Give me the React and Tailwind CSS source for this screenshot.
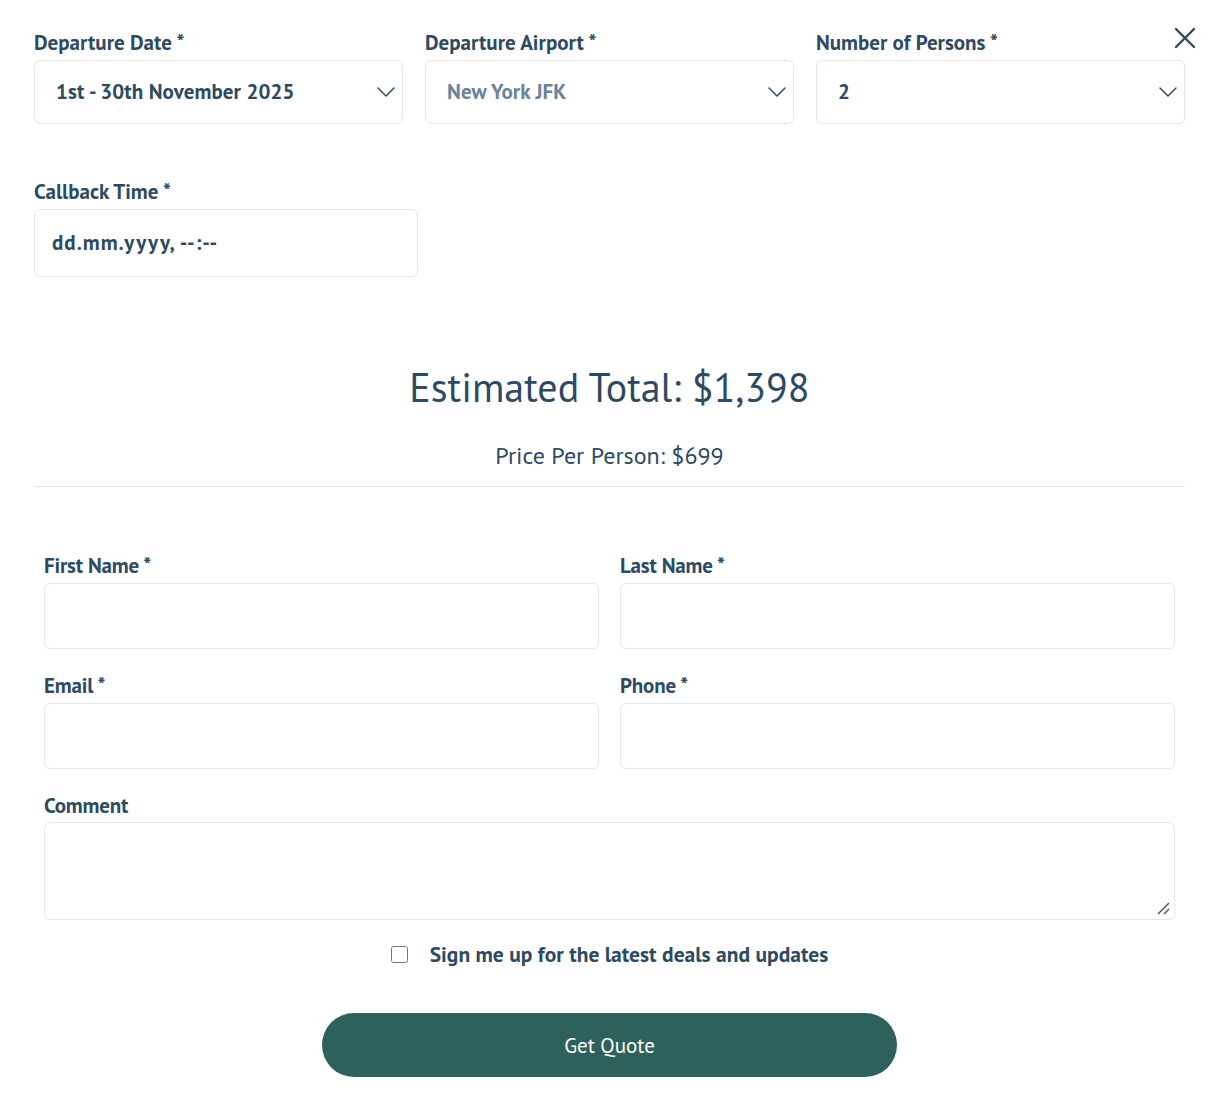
import React from 'react';

const font = { fontFamily: '"PT Sans", Lato, "Noto Sans", sans-serif' };

function Chevron() {
  return (
    <svg width="18" height="10" viewBox="0 0 18 10" fill="none" className="shrink-0">
      <path d="M1 1l8 8 8-8" stroke="#2e4a62" strokeWidth="1.5" strokeLinecap="round" strokeLinejoin="round" />
    </svg>
  );
}

function SelectBox({ label, value, muted }) {
  return (
    <div className="flex flex-col">
      <label className="text-[21px] leading-[24px] font-bold text-[#2e4a62] mb-[5px]">{label} *</label>
      <div className="h-[64px] border border-[#e3e6ea] rounded-[6px] flex items-center justify-between pl-[21px] pr-[7px] bg-white">
        <span className={'text-[21px] font-bold tracking-[0.1px] ' + (muted ? 'text-[#6c8398]' : 'text-[#2e4a62]')}>{value}</span>
        <Chevron />
      </div>
    </div>
  );
}

function Field({ label, required, tall }) {
  return (
    <div className="flex flex-col">
      <label className={'text-[21px] leading-[24px] font-bold text-[#2e4a62] tracking-[-0.2px] ' + (tall ? 'mb-[4px]' : 'mb-[5px]')}>
        {label}{required ? ' *' : ''}
      </label>
      <div className={'relative border border-[#e3e6ea] rounded-[6px] bg-white ' + (tall ? 'h-[98px]' : 'h-[66px]')}>
        {tall && (
          <svg className="absolute right-[4px] bottom-[4px]" width="14" height="14" viewBox="0 0 14 14">
            <path d="M13 2L2 13M13 8L8 13" stroke="#555" strokeWidth="1.5" />
          </svg>
        )}
      </div>
    </div>
  );
}

export default function App() {
  return (
    <div className="w-[1226px] h-[1108px] bg-white relative" style={font}>
      <button className="absolute left-[1174px] top-[27px] w-[22px] h-[22px]">
        <svg width="22" height="22" viewBox="0 0 22 22">
          <path d="M2 2l18 18M20 2L2 20" stroke="#2e4a62" strokeWidth="2.4" strokeLinecap="round" />
        </svg>
      </button>

      <div className="px-[34px] pt-[31px] pr-[41px]">
        <div className="grid grid-cols-3 gap-[22px]">
          <SelectBox label="Departure Date" value="1st - 30th November 2025" />
          <SelectBox label="Departure Airport" value="New York JFK" muted />
          <SelectBox label="Number of Persons" value="2" />
        </div>

        <div className="mt-[56px] w-[384px] flex flex-col">
          <label className="text-[21px] leading-[24px] font-bold text-[#2e4a62] mb-[5px]">Callback Time *</label>
          <div className="h-[68px] border border-[#e3e6ea] rounded-[6px] flex items-center pl-[17px]">
            <span className="text-[21px] font-bold text-[#2e4a62] tracking-[1px]">dd.mm.yyyy, --:--</span>
          </div>
        </div>

        <div className="mt-[86px] text-center text-[40px] leading-[48px] text-[#2e4a62]">Estimated Total: $1,398</div>
        <div className="mt-[30px] text-center text-[24px] leading-[30px] text-[#2e4a62]">Price Per Person: $699</div>
        <div className="mt-[15px] border-t border-[#e3e6ea]" />

        <div className="px-[10px] pt-[67px]">
          <div className="grid grid-cols-2 gap-x-[21px] gap-y-[25px]">
            <Field label="First Name" required />
            <Field label="Last Name" required />
            <Field label="Email" required />
            <Field label="Phone" required />
            <div className="col-span-2">
              <Field label="Comment" tall />
            </div>
          </div>

          <div className="mt-[18px] flex items-center justify-center gap-[22px]">
            <input type="checkbox" className="w-[17px] h-[17px] m-0" />
            <span className="text-[21.5px] font-bold text-[#2e4a62]">Sign me up for the latest deals and updates</span>
          </div>

          <div className="mt-[43px] flex justify-center">
            <button className="w-[575px] h-[64px] rounded-full bg-[#2e615c] text-white text-[21px]">Get Quote</button>
          </div>
        </div>
      </div>
    </div>
  );
}
